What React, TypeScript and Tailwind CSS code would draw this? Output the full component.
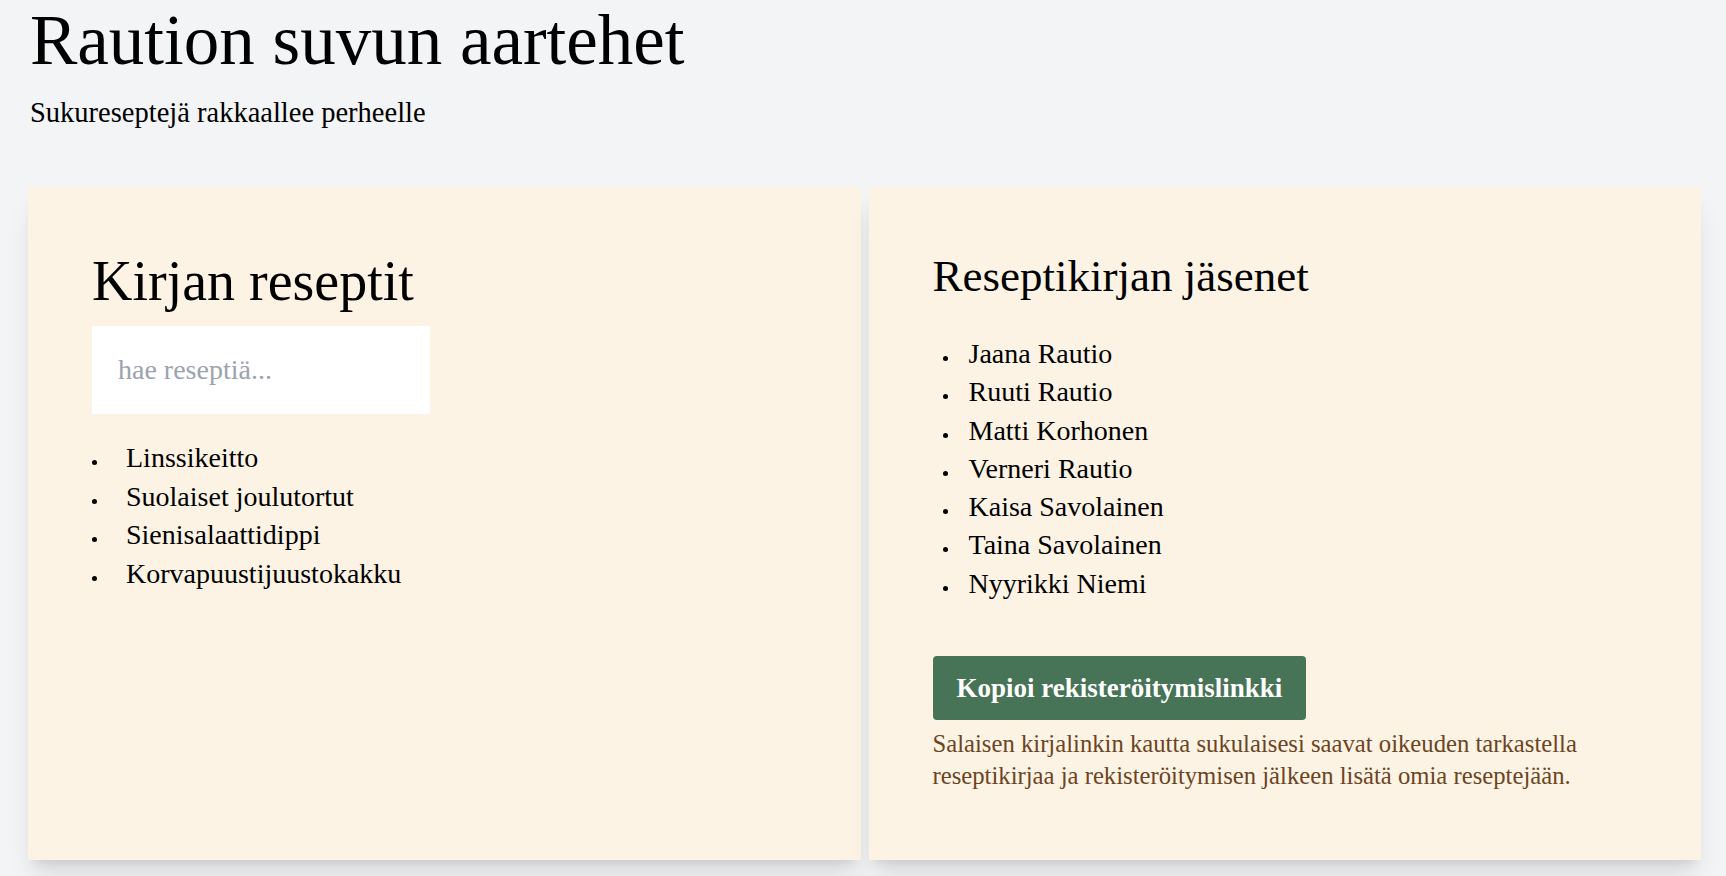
import React from "react";

const recipes = ["Linssikeitto", "Suolaiset joulutortut", "Sienisalaattidippi", "Korvapuustijuustokakku"];
const members = [
  "Jaana Rautio",
  "Ruuti Rautio",
  "Matti Korhonen",
  "Verneri Rautio",
  "Kaisa Savolainen",
  "Taina Savolainen",
  "Nyyrikki Niemi",
];

export default function App() {
  return (
    <div className="min-h-screen w-full bg-[#f3f4f6] font-['Liberation_Serif','Times_New_Roman',serif] text-black">
      <header className="pl-[30px] pt-[5px]">
        <h1 className="text-[71px] leading-none font-normal">Raution suvun aartehet</h1>
        <p className="mt-[21px] text-[28.5px] leading-[32px]">Sukureseptejä rakkaallee perheelle</p>
      </header>

      <main className="mt-[58px] flex gap-2 pl-7 pr-[25px] pb-[16px]">
        <section className="flex-1 bg-[#fdf3e5] px-16 pt-[62px] pb-[68px] shadow-xl">
          <h2 className="text-[56px] leading-[64px] font-normal">Kirjan reseptit</h2>
          <input
            type="text"
            placeholder="hae reseptiä..."
            className="mt-[13px] block h-[88px] w-[338px] bg-white px-[26px] text-[28px] outline-none placeholder:text-[#9ca3af]"
          />
          <ul className="mt-[25px]">
            {recipes.map((r) => (
              <li key={r} className="flex items-start text-[28px] leading-[38.5px]">
                <span className="w-[34px] shrink-0">
                  <span className="mt-[21px] block h-[5px] w-[5px] rounded-full bg-black" />
                </span>
                <span>{r}</span>
              </li>
            ))}
          </ul>
        </section>

        <section className="flex-1 bg-[#fdf3e5] px-16 pt-[63px] pb-[68px] shadow-xl">
          <h2 className="text-[45px] leading-[52px] font-normal">Reseptikirjan jäsenet</h2>
          <ul className="mt-[33px]">
            {members.map((m) => (
              <li key={m} className="flex items-start text-[28px] leading-[38.3px]">
                <span className="w-[36px] shrink-0 pl-[10px]">
                  <span className="mt-[21px] block h-[5px] w-[5px] rounded-full bg-black" />
                </span>
                <span>{m}</span>
              </li>
            ))}
          </ul>
          <button
            type="button"
            className="mt-[53px] h-[64px] rounded-[4px] bg-[#477357] px-[24px] text-[27px] font-bold text-white"
          >
            Kopioi rekisteröitymislinkki
          </button>
          <p className="mt-[8px] text-[24.7px] leading-[32px] text-[#6b4423]">
            Salaisen kirjalinkin kautta sukulaisesi saavat oikeuden tarkastella reseptikirjaa ja rekisteröitymisen
            jälkeen lisätä omia reseptejään.
          </p>
        </section>
      </main>
    </div>
  );
}
